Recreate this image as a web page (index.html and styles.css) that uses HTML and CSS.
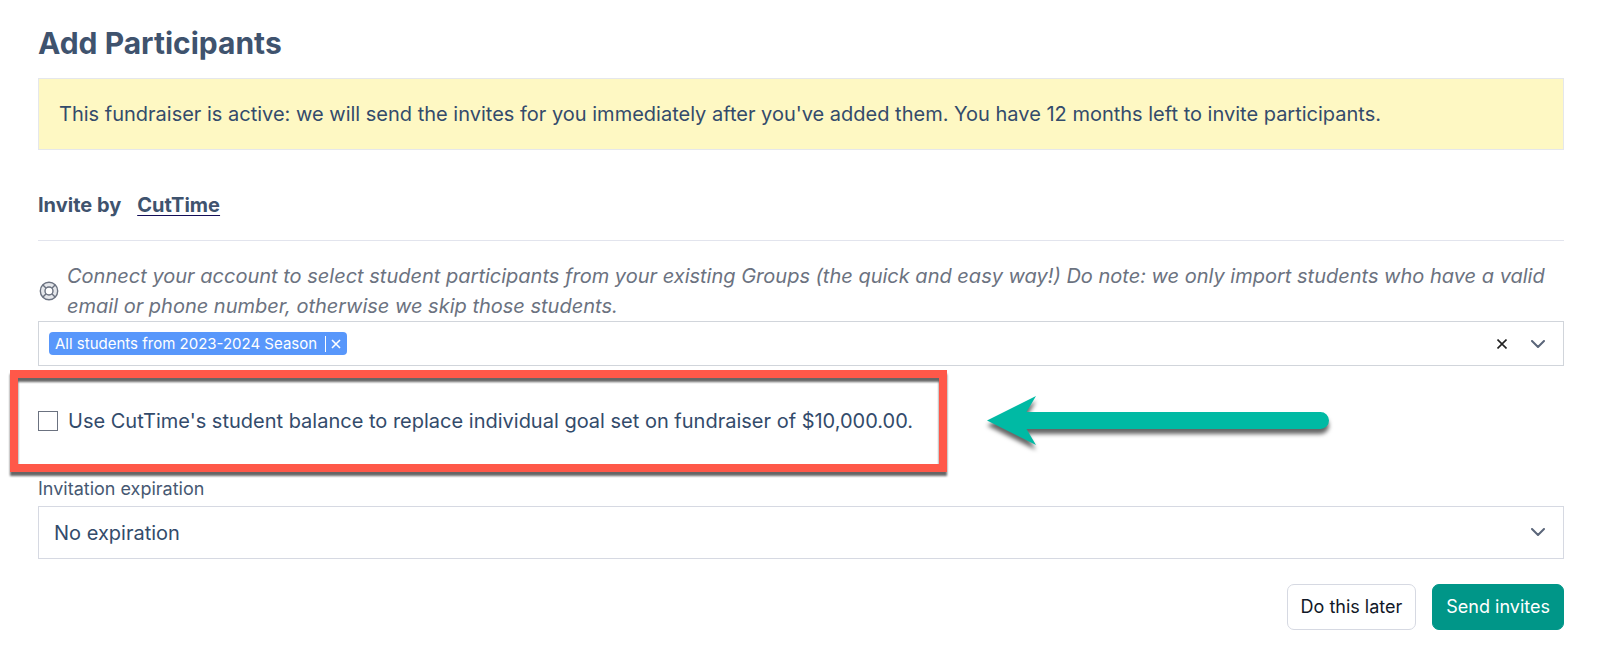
FILE: index.html
```html
<!DOCTYPE html>
<html lang="en">
<head>
<meta charset="utf-8">
<meta name="viewport" content="width=device-width, initial-scale=1">
<title>Add Participants</title>
<link rel="stylesheet" href="styles.css">
</head>
<body>
<main class="page">
  <h1 class="title">Add Participants</h1>
  <p class="alert">This fundraiser is active: we will send the invites for you immediately after you've added them. You have 12 months left to invite participants.</p>

  <div class="tabs">
    <span>Invite by</span>
    <a class="tab-link" href="#cuttime">CutTime</a>
  </div>

  <form class="form">
    <div class="help">
      <svg class="help-icon" viewBox="0 0 20 20" aria-hidden="true">
        <circle cx="10" cy="10" r="6" fill="none" stroke="#e5e7eb" stroke-width="5"/>
        <g fill="none" stroke="#6b7280" stroke-width="1.4">
          <circle cx="10" cy="10" r="8.700"/>
          <circle cx="10" cy="10" r="4"/>
          <path d="M3.900 3.900l3.300 3.300M16.100 3.900l-3.300 3.300M3.900 16.100l3.300-3.300M16.100 16.100l-3.300-3.300"/>
        </g>
      </svg>
      <p class="help-text" id="groups-help">Connect your account to select student participants from your existing Groups (the quick and easy way!) Do note: we only import students who have a valid email or phone number, otherwise we skip those students.</p>
    </div>

    <div class="groups" role="group" aria-label="Groups" aria-describedby="groups-help">
      <span class="tag">
        <span class="tag-label">All students from 2023-2024 Season</span>
        <button class="tag-remove" type="button" aria-label="Remove group">
          <svg class="tag-x" viewBox="0 0 10 10" aria-hidden="true"><path d="M1 1l8 8M9 1l-8 8" fill="none" stroke="currentColor" stroke-width="1.6"/></svg>
        </button>
      </span>
      <span class="groups-actions">
        <button class="icon-button clear" type="button" aria-label="Clear all">
          <svg class="clear-x" viewBox="0 0 10 10" aria-hidden="true"><path d="M.5 .5l9 9M9.500 .5l-9 9" fill="none" stroke="currentColor" stroke-width="1.6"/></svg>
        </button>
        <button class="icon-button" type="button" aria-label="Show groups">
          <svg class="chevron" viewBox="0 0 14 8" aria-hidden="true"><path d="M1 1l6 6 6-6" fill="none" stroke="currentColor" stroke-width="2" stroke-linecap="round" stroke-linejoin="round"/></svg>
        </button>
      </span>
    </div>

    <div class="balance">
      <label class="check">
        <input class="check-box" type="checkbox">
        <span>Use CutTime's student balance to replace individual goal set on fundraiser of $10,000.00.</span>
      </label>
      <div class="callout-frame"></div>
      <svg class="callout-arrow" viewBox="0 0 342 50" aria-hidden="true">
        <path d="M0 24.500L49 0 39.500 16H333.500a8.500 8.500 0 0 1 0 17H39.500L49 49z" fill="#00baa4"/>
      </svg>
    </div>

    <label class="field-label" for="expiration">Invitation expiration</label>
    <div class="select-wrap">
      <select class="select" id="expiration">
        <option>No expiration</option>
      </select>
      <svg class="chevron select-chevron" viewBox="0 0 14 8" aria-hidden="true"><path d="M1 1l6 6 6-6" fill="none" stroke="currentColor" stroke-width="2" stroke-linecap="round" stroke-linejoin="round"/></svg>
    </div>

    <div class="actions">
      <button class="button" type="button">Do this later</button>
      <button class="button button-primary" type="submit">Send invites</button>
    </div>
  </form>
</main>
</body>
</html>
```

FILE: styles.css
```css
*,
*::before,
*::after {
  box-sizing: border-box;
}

body {
  margin: 0;
  background: #fff;
  color: #334b6b;
  font: 20px/30px Inter, sans-serif;
}

button,
select,
input {
  margin: 0;
  font: inherit;
}

button {
  cursor: pointer;
}

.page {
  padding: 24px 36px 32px 38px;
}

.title {
  margin: 0 0 16px;
  color: #3f536e;
  font-size: 30px;
  line-height: 38px;
  font-weight: 700;
}

.alert {
  margin: 0;
  padding: 20px;
  border: 1px solid #e5e7eb;
  background: #fef8c3;
}

.tabs {
  display: flex;
  gap: 16px;
  margin-top: 40px;
  padding-bottom: 20px;
  border-bottom: 1px solid #e2e4ed;
  color: #3f536e;
  font-weight: 700;
}

.tab-link {
  color: inherit;
  text-decoration: underline #120d58 1px;
  text-underline-offset: 3px;
}

.form {
  margin: 0;
}

.help {
  display: flex;
  align-items: center;
  gap: 8px;
  margin-top: 20px;
  padding-left: 1px;
  color: #6b7280;
}

.help-icon {
  flex: none;
  width: 20px;
  height: 20px;
}

.help-text {
  margin: 0;
  font-style: italic;
}

.groups {
  display: flex;
  align-items: center;
  justify-content: space-between;
  min-height: 45px;
  padding: 0 18px 0 10px;
  border: 1px solid #d1d5db;
}

.tag {
  display: flex;
  align-items: center;
  padding: 0 6px;
  border-radius: 4px;
  background: #5897fb;
  color: #fff;
  font-size: 15px;
  line-height: 23px;
}

.tag-remove {
  display: flex;
  margin-left: 8px;
  padding: 3px 0 3px 5px;
  border: 0;
  border-left: 1px solid #fff;
  background: none;
  color: inherit;
}

.tag-x {
  width: 10px;
  height: 10px;
}

.groups-actions {
  display: flex;
  align-items: center;
  gap: 24px;
}

.icon-button {
  display: flex;
  padding: 0;
  border: 0;
  background: none;
  color: #5b667a;
}

.clear {
  color: #222;
}

.clear-x {
  width: 10px;
  height: 10px;
}

.chevron {
  width: 14px;
  height: 8px;
  color: #5b667a;
}

.balance {
  position: relative;
  padding: 40px 0 39px;
}

.check {
  display: flex;
  align-items: center;
  gap: 10px;
}

.check-box {
  flex: none;
  width: 20px;
  height: 20px;
  border: 1px solid #6b7280;
  background: #fff;
  appearance: none;
}

.check-box:checked {
  background: #009688;
}

/* Highlight drawn over the form around the balance option */
.callout-frame {
  position: absolute;
  top: 4px;
  left: -28px;
  width: 937px;
  height: 102px;
  border: 8px solid #ff5849;
  filter: drop-shadow(0 4px 1px rgba(0, 0, 0, 0.6));
  pointer-events: none;
}

.callout-arrow {
  position: absolute;
  top: 30px;
  left: 949px;
  width: 342px;
  height: 50px;
  overflow: visible;
  filter: drop-shadow(0 5px 2px rgba(0, 0, 0, 0.6));
  pointer-events: none;
}

.field-label {
  display: block;
  margin-bottom: 3px;
  color: #465872;
  font-size: 18px;
  line-height: 28px;
}

.select-wrap {
  position: relative;
}

.select {
  display: block;
  width: 100%;
  height: 53px;
  padding: 0 48px 0 15px;
  border: 1px solid #d6d9e2;
  border-radius: 0;
  background: #fff;
  color: inherit;
  appearance: none;
}

.select-chevron {
  position: absolute;
  top: 22px;
  right: 19px;
  pointer-events: none;
}

.actions {
  display: flex;
  justify-content: flex-end;
  gap: 16px;
  margin-top: 25px;
}

.button {
  padding: 8px 13px;
  border: 1px solid #d6d9e2;
  border-radius: 7px;
  background: #fff;
  color: #111827;
  font-size: 18px;
  line-height: 28px;
}

.button-primary {
  border-color: #009688;
  background: #009688;
  color: #fff;
}
```
